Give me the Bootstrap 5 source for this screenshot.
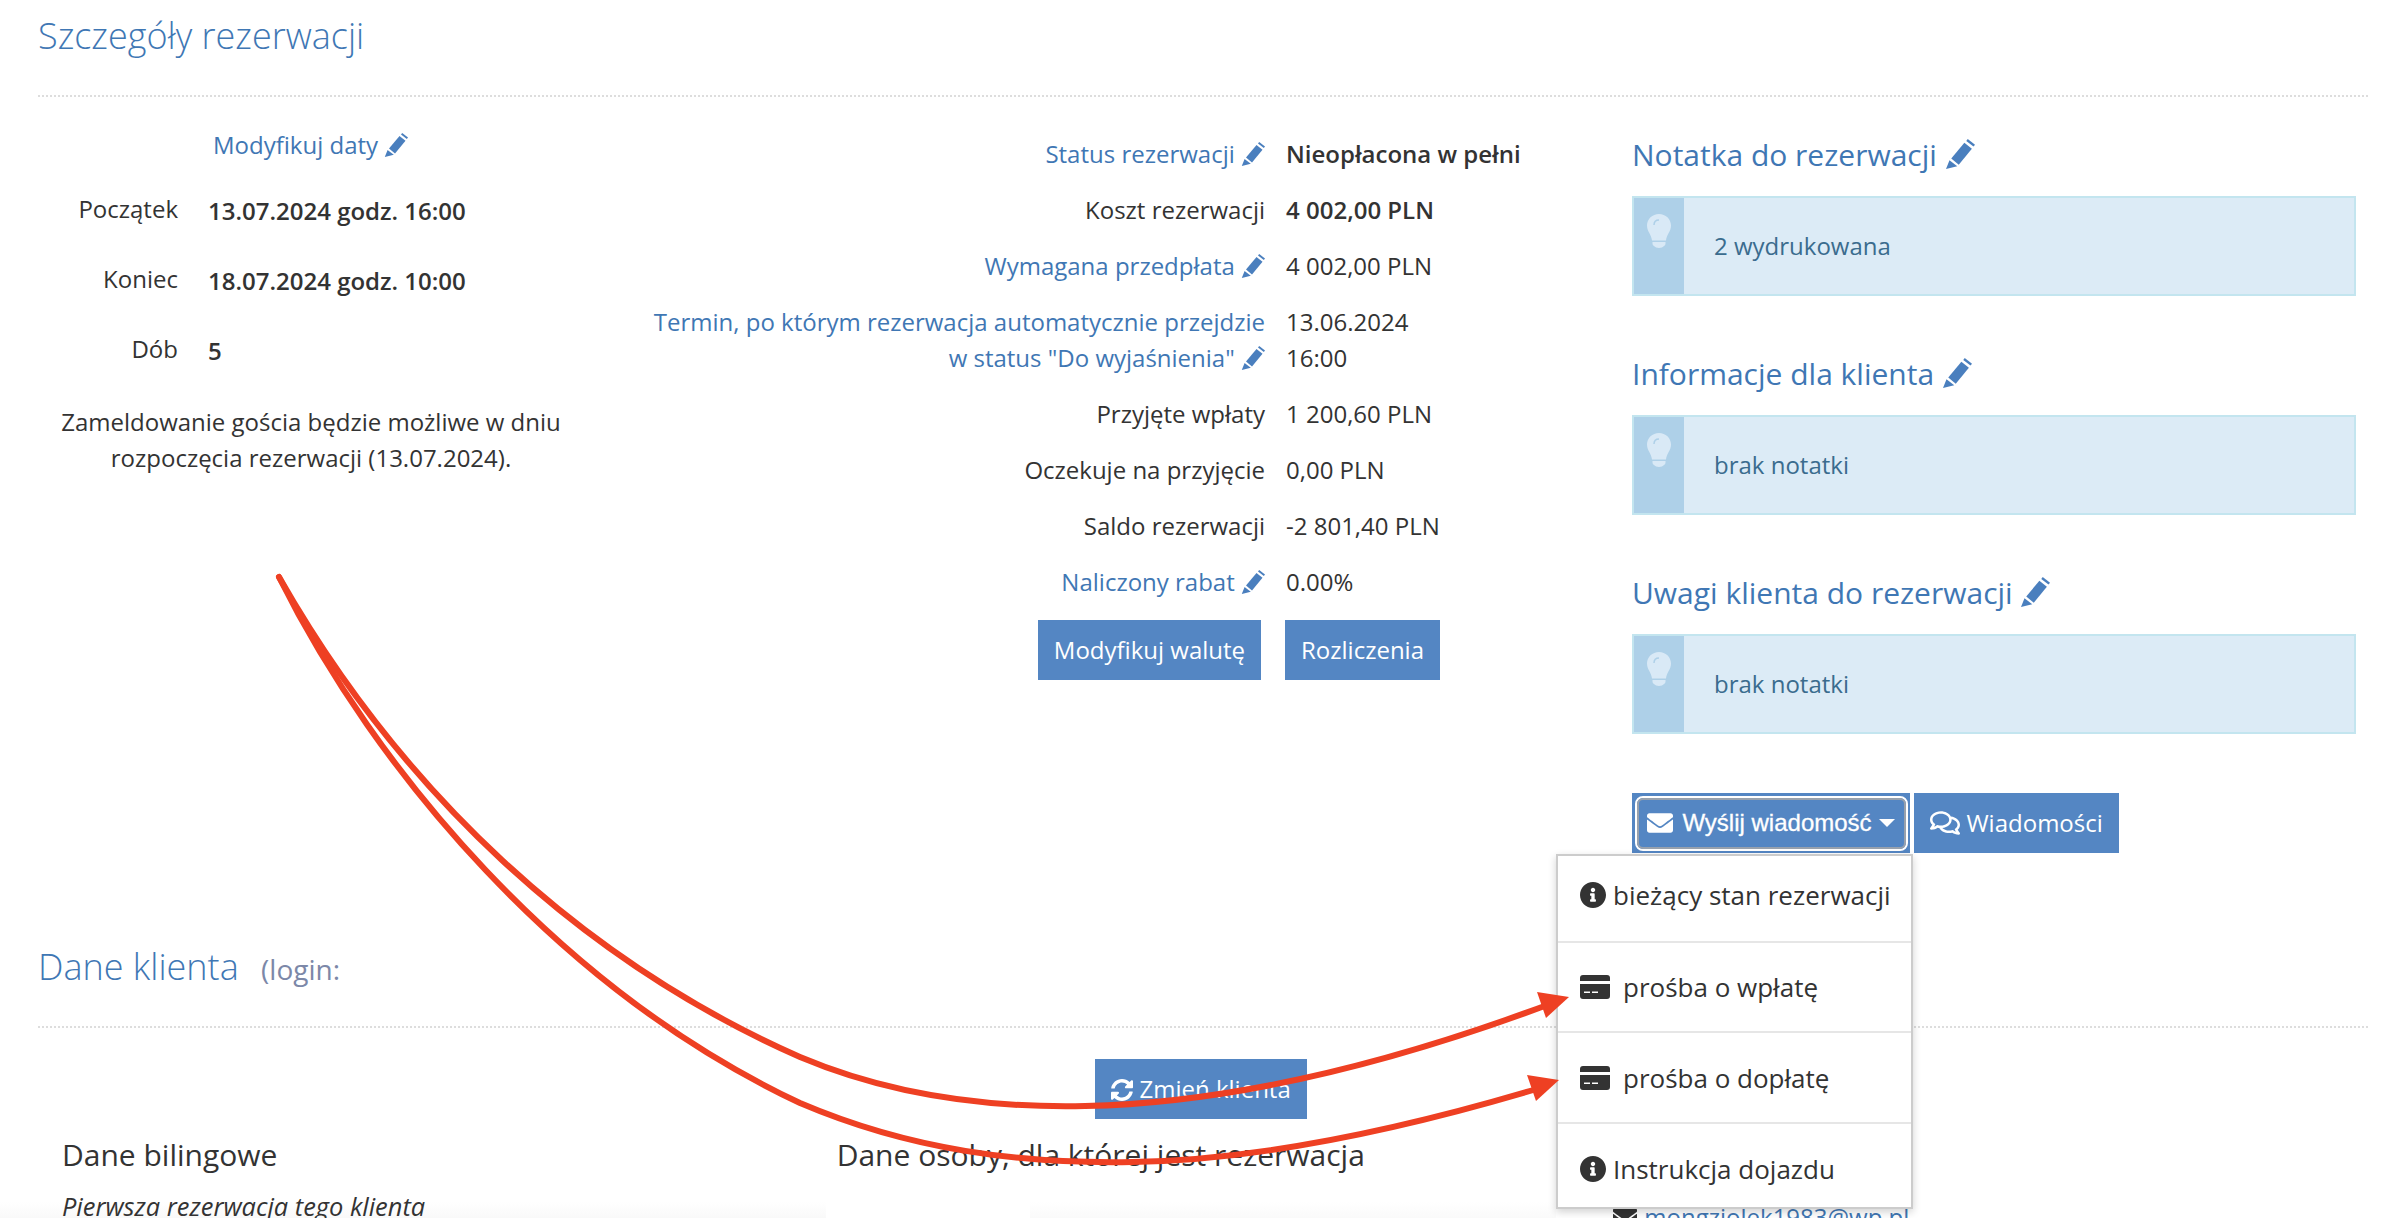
<!DOCTYPE html>
<html lang="pl">
<head>
    <meta charset="UTF-8">
    <meta name="viewport" content="width=device-width, initial-scale=1.0">
    <title>Szczegóły rezerwacji</title>
    <link rel="stylesheet" href="https://cdn.jsdelivr.net/npm/bootstrap@5.3.0/dist/css/bootstrap.min.css">
    <style>
        html, body { height: 1218px; overflow: hidden; }
        body { position: relative; color: #333; font-family: "Open Sans", "Noto Sans", sans-serif; font-size: 24px; line-height: 36px;
            background: linear-gradient(#fff, #f9f9f9) no-repeat 0 1202px / 826px 16px, linear-gradient(#fff, #fafafa) no-repeat 1030px 1202px / 526px 16px, #fff; }
        a { color: #3f77b4; text-decoration: none; }
        .page-wrap { padding: 0 36px 0 38px; }

        .section-head { height: 97px; margin: 0 -12px 0 0; border-bottom: 2px dotted #ddd; font-size: 36px; font-weight: 300; line-height: 72px; color: #3f77b4; }
        .section-head small { margin-left: 13px; font-size: 28px; font-weight: 400; color: #7c88a8; }
        .ico-pencil { width: 24px; height: 24px; fill: #4a7fbe; vertical-align: -3px; }

        .res-cols { margin-bottom: 78px; }
        .res-left { width: 546px; padding-top: 30px; }
        .res-mid { width: 1048px; padding-top: 39px; }
        .res-right { width: 724px; padding-top: 37px; }

        .date-link { padding-left: 175px; margin-bottom: 28px; }
        .date-row { height: 70px; }
        .date-label { width: 140px; margin-right: 30px; text-align: right; }
        .date-value { position: relative; top: 2px; font-weight: 600; }
        .date-note { margin-top: 3px; text-align: center; }

        .cost-row { margin-bottom: 20px; }
        .cost-label { width: 681px; margin-right: 21px; text-align: right; }
        .cost-buttons { width: 856px; }
        .cost-buttons .btn + .btn { margin-left: 24px; }

        .btn-res { padding: 12px 16px; border: 0; border-radius: 0; background: #5486c3; color: #fff; font-size: 24px; line-height: 36px; }
        .btn-res:hover { background: #5486c3; color: #fff; }

        .note-title { margin: 0 0 20px; font-size: 30px; line-height: 42px; color: #3f77b4; }
        .note-title .ico-pencil { width: 30px; height: 30px; vertical-align: -3px; }
        .note-box { height: 100px; margin-bottom: 57px; border: 2px solid #c3e5ef; background: #dcebf6; color: #3a6c8e; }
        .note-side { width: 50px; padding-top: 16px; background: #aed0e8; text-align: center; }
        .note-side svg { width: 24px; height: 34px; display: inline-block; vertical-align: top; }
        .note-text { padding-left: 30px; }

        .msg-group { margin-top: 59px; }
        .btn-send { width: 278px; height: 60px; padding: 2.5px; color: #fff; }
        .btn-send > span { height: 100%; border: 2.5px solid #fff; border-radius: 8px; }
        .btn-send > span > span { width: 100%; height: 100%; border: 2.5px solid #98a1ad; border-radius: 6px; font-family: "Liberation Sans", Arial, sans-serif; font-size: 24px; -webkit-text-stroke: .3px #fff; }
        .btn-send svg { width: 26px; height: 26px; fill: #fff; margin-right: 9px; }
        .caret-down { width: 0; height: 0; margin-left: 7px; border: 8px solid transparent; border-top-color: #fff; border-bottom: 0; }
        .btn-msgs { width: 205px; height: 60px; margin-left: 4px; padding: 12px 0; }
        .btn-msgs svg { width: 30px; height: 26px; fill: #fff; vertical-align: -4px; }

        .dropdown-menu.msg-menu { top: 61px; left: -76px; width: 357px; margin: 0; padding: 0; border: 2px solid #ccc; border-radius: 0; box-shadow: 0 3px 8px rgba(0, 0, 0, .18); z-index: 5; }
        .msg-item { height: 91px; padding: 0 0 0 22px; color: #333; font-size: 26px; line-height: 36px; }
        .msg-item + .msg-item { border-top: 2px solid #e6e6e6; }
        .msg-item:first-child { height: 85px; padding-bottom: 8px; }
        .msg-item:nth-child(2) { height: 90px; }
        .msg-item:last-child { height: 85px; padding-top: 6px; }
        .msg-item svg { fill: #333; }
        .ico-info { width: 26px; height: 26px; margin-right: 7px; }
        .ico-card { width: 30px; height: 24px; margin-right: 13px; }

        .client-btn-wrap { margin-top: 31px; padding-left: 8px; }
        .ico-sync { width: 22px; height: 22px; fill: #fff; vertical-align: -3px; }
        .client-cols { margin-top: 15px; }
        .client-col { width: 775px; padding-left: 24px; }
        .client-col + .client-col { padding-left: 26px; }
        .client-col + .client-col.client-col-mail { padding-left: 30px; padding-top: 65px; }
        .client-name { margin: 0 0 12px; font-size: 30px; font-weight: 400; line-height: 42px; color: #333; }
        .client-first { font-size: 25.4px; }
        .client-mail svg { width: 24px; height: 24px; fill: #333; margin-right: 7px; }

        .arrows { position: absolute; left: 0; top: 0; width: 2392px; height: 1218px; z-index: 10; pointer-events: none; }
    </style>
</head>
<body>
    <svg width="0" height="0" class="position-absolute">
        <symbol id="pencil" viewBox="0 0 24 24"><path d="M5 15.500 15.500 3l6 4.800L11 20.500z"/><path d="M17 1.500 18.200 0 24 4.500 22.800 6z"/><path d="M3.600 17l6.200 4.800L.8 24z"/></symbol>
        <symbol id="info" viewBox="8 8 496 496"><path d="M256 8C119 8 8 119 8 256s111 248 248 248 248-111 248-248S393 8 256 8zm0 110c23.200 0 42 18.800 42 42s-18.800 42-42 42-42-18.800-42-42 18.800-42 42-42zm56 254c0 6.600-5.400 12-12 12h-88c-6.600 0-12-5.400-12-12v-24c0-6.600 5.400-12 12-12h12v-64h-12c-6.600 0-12-5.400-12-12v-24c0-6.600 5.400-12 12-12h64c6.600 0 12 5.400 12 12v100h12c6.600 0 12 5.400 12 12v24z"/></symbol>
        <symbol id="card" viewBox="0 0 30 24"><path d="M3 0h24a3 3 0 0 1 3 3v3H0V3a3 3 0 0 1 3-3z"/><path d="M0 9h30v12a3 3 0 0 1-3 3H3a3 3 0 0 1-3-3zm4 7.500v1.500h6v-1.500zm8 0v1.500h6v-1.500z" fill-rule="evenodd"/></symbol>
        <symbol id="envelope" viewBox="0 64 512 384"><path d="M502.300 190.800c3.900-3.100 9.700-.2 9.700 4.700V400c0 26.500-21.500 48-48 48H48c-26.500 0-48-21.500-48-48V195.600c0-5 5.700-7.800 9.700-4.700 22.400 17.400 52.100 39.500 154.100 113.600 21.100 15.400 56.700 47.800 92.200 47.600 35.700.3 72-32.800 92.300-47.600 102-74.100 131.600-96.300 154-113.700zM256 320c23.200.4 56.600-29.200 73.400-41.400 132.700-96.300 142.800-104.700 173.400-128.700 5.800-4.500 9.200-11.500 9.200-18.900v-19c0-26.500-21.500-48-48-48H48C21.500 64 0 85.500 0 112v19c0 7.400 3.400 14.300 9.200 18.900 30.600 23.900 40.700 32.400 173.400 128.700 16.800 12.200 50.200 41.800 73.400 41.400z"/></symbol>
        <symbol id="comments" viewBox="0 32 576 448"><path d="M532 386.200c27.500-27.100 44-61.100 44-98.200 0-80-76.500-146.100-176.200-157.900C368.300 72.500 294.300 32 208 32 93.100 32 0 103.600 0 192c0 37 16.500 71 44 98.200-15.300 30.700-37.300 54.500-37.700 54.900-6.300 6.700-8.100 16.500-4.400 25 3.600 8.500 12 14 21.200 14 53.500 0 96.700-20.200 125.200-38.800 9.200 2.100 18.700 3.700 28.400 4.900C208.100 407.600 281.800 448 368 448c20.800 0 40.800-2.400 59.800-6.800C456.300 459.700 499.400 480 553 480c9.200 0 17.500-5.500 21.200-14 3.600-8.500 1.900-18.300-4.400-25-.4-.3-22.500-24.100-37.800-54.800zm-392.800-92.300L122.100 305c-14.100 9.100-28.500 16.300-43.100 21.400 2.700-4.700 5.400-9.700 8-14.800l15.500-31.100L77.700 256C64.200 242.600 48 220.700 48 192c0-60.700 71.800-112 160-112s160 51.300 160 112-71.800 112-160 112c-16.800 0-33.400-1.900-49.300-5.600l-19.500-4.500zM498.300 352l-24.700 24.400 15.500 31.100c2.600 5.100 5.300 10.100 8 14.800-14.600-5.100-29-12.300-43.100-21.400l-17.100-11.100-19.900 4.600c-16 3.700-32.500 5.600-49.300 5.600-54 0-102.200-20.100-131.300-49.700C338 339.500 416 272.900 416 192c0-3.400-.4-6.700-.7-10C479.700 196.500 528 238.800 528 288c0 28.700-16.200 50.600-29.700 64z"/></symbol>
        <symbol id="sync" viewBox="8 8 496 496"><path d="M370.700 133.300C339.500 104 298.900 88 255.800 88c-77.500.1-144.300 53.200-162.800 126.900-1.300 5.400-6.100 9.100-11.600 9.100H24.100c-7.500 0-13.200-6.800-11.800-14.200C33.900 94.900 134.800 8 256 8c66.400 0 126.800 26.100 171.300 68.700L463 41c15.100-15.100 41-4.400 41 17v134c0 13.300-10.700 24-24 24H345.900c-21.400 0-32.100-25.900-17-41zM32 296h134.100c21.400 0 32.100 25.900 17 41l-41.800 41.700c31.300 29.300 71.800 45.300 114.900 45.300 77.400-.1 144.300-53.100 162.800-126.800 1.300-5.400 6.100-9.200 11.600-9.200h57.300c7.500 0 13.200 6.800 11.800 14.200C478.100 417.100 377.200 504 256 504c-66.400 0-126.800-26.100-171.300-68.700L49 471c-15.100 15.100-41 4.400-41-17V320c0-13.300 10.700-24 24-24z"/></symbol>
    </svg>

    <main class="page-wrap">
        <!-- Szczegoly -->
        <h1 class="section-head">Szczegóły rezerwacji</h1>
        <div class="d-flex res-cols">
            <div class="res-left">
                <div class="date-link"><a href="#">Modyfikuj daty <svg class="ico-pencil"><use href="#pencil"/></svg></a></div>
                <div class="d-flex date-row"><div class="date-label">Początek</div><div class="date-value">13.07.2024 godz. 16:00</div></div>
                <div class="d-flex date-row"><div class="date-label">Koniec</div><div class="date-value">18.07.2024 godz. 10:00</div></div>
                <div class="d-flex date-row"><div class="date-label">Dób</div><div class="date-value">5</div></div>
                <div class="date-note">Zameldowanie gościa będzie możliwe w dniu<br>rozpoczęcia rezerwacji (13.07.2024).</div>
            </div>

            <div class="res-mid">
                <div class="d-flex cost-row"><div class="cost-label"><a href="#">Status rezerwacji <svg class="ico-pencil"><use href="#pencil"/></svg></a></div><div class="fw-semibold">Nieopłacona w pełni</div></div>
                <div class="d-flex cost-row"><div class="cost-label">Koszt rezerwacji</div><div class="fw-semibold">4 002,00 PLN</div></div>
                <div class="d-flex cost-row"><div class="cost-label"><a href="#">Wymagana przedpłata <svg class="ico-pencil"><use href="#pencil"/></svg></a></div><div>4 002,00 PLN</div></div>
                <div class="d-flex cost-row"><div class="cost-label"><a href="#">Termin, po którym rezerwacja automatycznie przejdzie<br>w status "Do wyjaśnienia" <svg class="ico-pencil"><use href="#pencil"/></svg></a></div><div>13.06.2024<br>16:00</div></div>
                <div class="d-flex cost-row"><div class="cost-label">Przyjęte wpłaty</div><div>1 200,60 PLN</div></div>
                <div class="d-flex cost-row"><div class="cost-label">Oczekuje na przyjęcie</div><div>0,00 PLN</div></div>
                <div class="d-flex cost-row"><div class="cost-label">Saldo rezerwacji</div><div>-2 801,40 PLN</div></div>
                <div class="d-flex cost-row"><div class="cost-label"><a href="#">Naliczony rabat <svg class="ico-pencil"><use href="#pencil"/></svg></a></div><div>0.00%</div></div>
                <div class="d-flex justify-content-end cost-buttons">
                    <button type="button" class="btn btn-res">Modyfikuj walutę</button>
                    <button type="button" class="btn btn-res">Rozliczenia</button>
                </div>
            </div>

            <div class="res-right">
                <h3 class="note-title">Notatka do rezerwacji <svg class="ico-pencil"><use href="#pencil"/></svg></h3>
                <div class="d-flex note-box">
                    <div class="note-side"><svg viewBox="0 0 24 34"><path fill="#d9e9f6" d="M12 0c6.600 0 12 5 12 11.500 0 6-4.200 8.500-5 15H5C4.200 20 0 17.500 0 11.500 0 5 5.400 0 12 0zM5.500 28h13v1.500c0 1-.5 2-1.500 2.500-1 1.300-3 2-5 2s-4-.7-5-2c-1-.5-1.500-1.500-1.500-2.500z"/><path fill="none" stroke="#aed0e8" stroke-width="1.500" d="M7 11c0-3 2-5 5-5"/></svg></div>
                    <div class="d-flex align-items-center note-text">2 wydrukowana</div>
                </div>
                <h3 class="note-title">Informacje dla klienta <svg class="ico-pencil"><use href="#pencil"/></svg></h3>
                <div class="d-flex note-box">
                    <div class="note-side"><svg viewBox="0 0 24 34"><path fill="#d9e9f6" d="M12 0c6.600 0 12 5 12 11.500 0 6-4.200 8.500-5 15H5C4.200 20 0 17.500 0 11.500 0 5 5.400 0 12 0zM5.500 28h13v1.500c0 1-.5 2-1.500 2.500-1 1.300-3 2-5 2s-4-.7-5-2c-1-.5-1.500-1.500-1.500-2.500z"/><path fill="none" stroke="#aed0e8" stroke-width="1.500" d="M7 11c0-3 2-5 5-5"/></svg></div>
                    <div class="d-flex align-items-center note-text">brak notatki</div>
                </div>
                <h3 class="note-title">Uwagi klienta do rezerwacji <svg class="ico-pencil"><use href="#pencil"/></svg></h3>
                <div class="d-flex note-box mb-0">
                    <div class="note-side"><svg viewBox="0 0 24 34"><path fill="#d9e9f6" d="M12 0c6.600 0 12 5 12 11.500 0 6-4.200 8.500-5 15H5C4.200 20 0 17.500 0 11.500 0 5 5.400 0 12 0zM5.500 28h13v1.500c0 1-.5 2-1.500 2.500-1 1.300-3 2-5 2s-4-.7-5-2c-1-.5-1.500-1.500-1.500-2.500z"/><path fill="none" stroke="#aed0e8" stroke-width="1.500" d="M7 11c0-3 2-5 5-5"/></svg></div>
                    <div class="d-flex align-items-center note-text">brak notatki</div>
                </div>

                <div class="d-flex msg-group">
                    <div class="dropdown">
                        <button type="button" class="btn btn-res btn-send d-block">
                            <span class="d-block"><span class="d-flex align-items-center justify-content-center"><svg><use href="#envelope"/></svg>Wyślij wiadomość<i class="caret-down"></i></span></span>
                        </button>
                        <ul class="dropdown-menu show msg-menu">
                            <li class="d-flex align-items-center msg-item"><svg class="ico-info"><use href="#info"/></svg>bieżący stan rezerwacji</li>
                            <li class="d-flex align-items-center msg-item"><svg class="ico-card"><use href="#card"/></svg>prośba o wpłatę</li>
                            <li class="d-flex align-items-center msg-item"><svg class="ico-card"><use href="#card"/></svg>prośba o dopłatę</li>
                            <li class="d-flex align-items-center msg-item"><svg class="ico-info"><use href="#info"/></svg>Instrukcja dojazdu</li>
                        </ul>
                    </div>
                    <button type="button" class="btn btn-res btn-msgs"><svg><use href="#comments"/></svg> Wiadomości</button>
                </div>
            </div>
        </div>

        <!-- Dane klienta -->
        <h1 class="section-head">Dane klienta <small>(login:</small></h1>
        <div class="text-center client-btn-wrap">
            <button type="button" class="btn btn-res"><svg class="ico-sync"><use href="#sync"/></svg> Zmień klienta</button>
        </div>
        <div class="d-flex client-cols">
            <div class="client-col">
                <h4 class="client-name">Dane bilingowe</h4>
                <div class="fst-italic client-first">Pierwsza rezerwacja tego klienta</div>
            </div>
            <div class="client-col">
                <h4 class="client-name">Dane osoby, dla której jest rezerwacja</h4>
            </div>
            <div class="client-col client-col-mail">
                <div class="d-flex align-items-center client-mail"><svg><use href="#envelope"/></svg><a href="#">mongziolek1983@wp.pl</a></div>
            </div>
        </div>
    </main>

    <!-- strzalki na screenie -->
    <svg class="arrows" viewBox="0 0 2392 1218">
        <g fill="none" stroke="#ee4023" stroke-width="6" stroke-linecap="round">
            <path d="M279 577C400 790 580 960 800 1057C890 1095 990 1108 1085 1106C1240 1103 1400 1060 1550 1004"/>
            <path d="M279 577C375 770 560 990 800 1103C910 1150 1020 1164 1132 1162C1260 1160 1400 1130 1540 1088"/>
        </g>
        <path fill="#ee4023" d="M1569 997 1537 992 1546 1018z"/>
        <path fill="#ee4023" d="M1559 1080 1527 1075 1536 1101z"/>
    </svg>

    <script src="https://cdn.jsdelivr.net/npm/bootstrap@5.3.0/dist/js/bootstrap.bundle.min.js"></script>
</body>
</html>
